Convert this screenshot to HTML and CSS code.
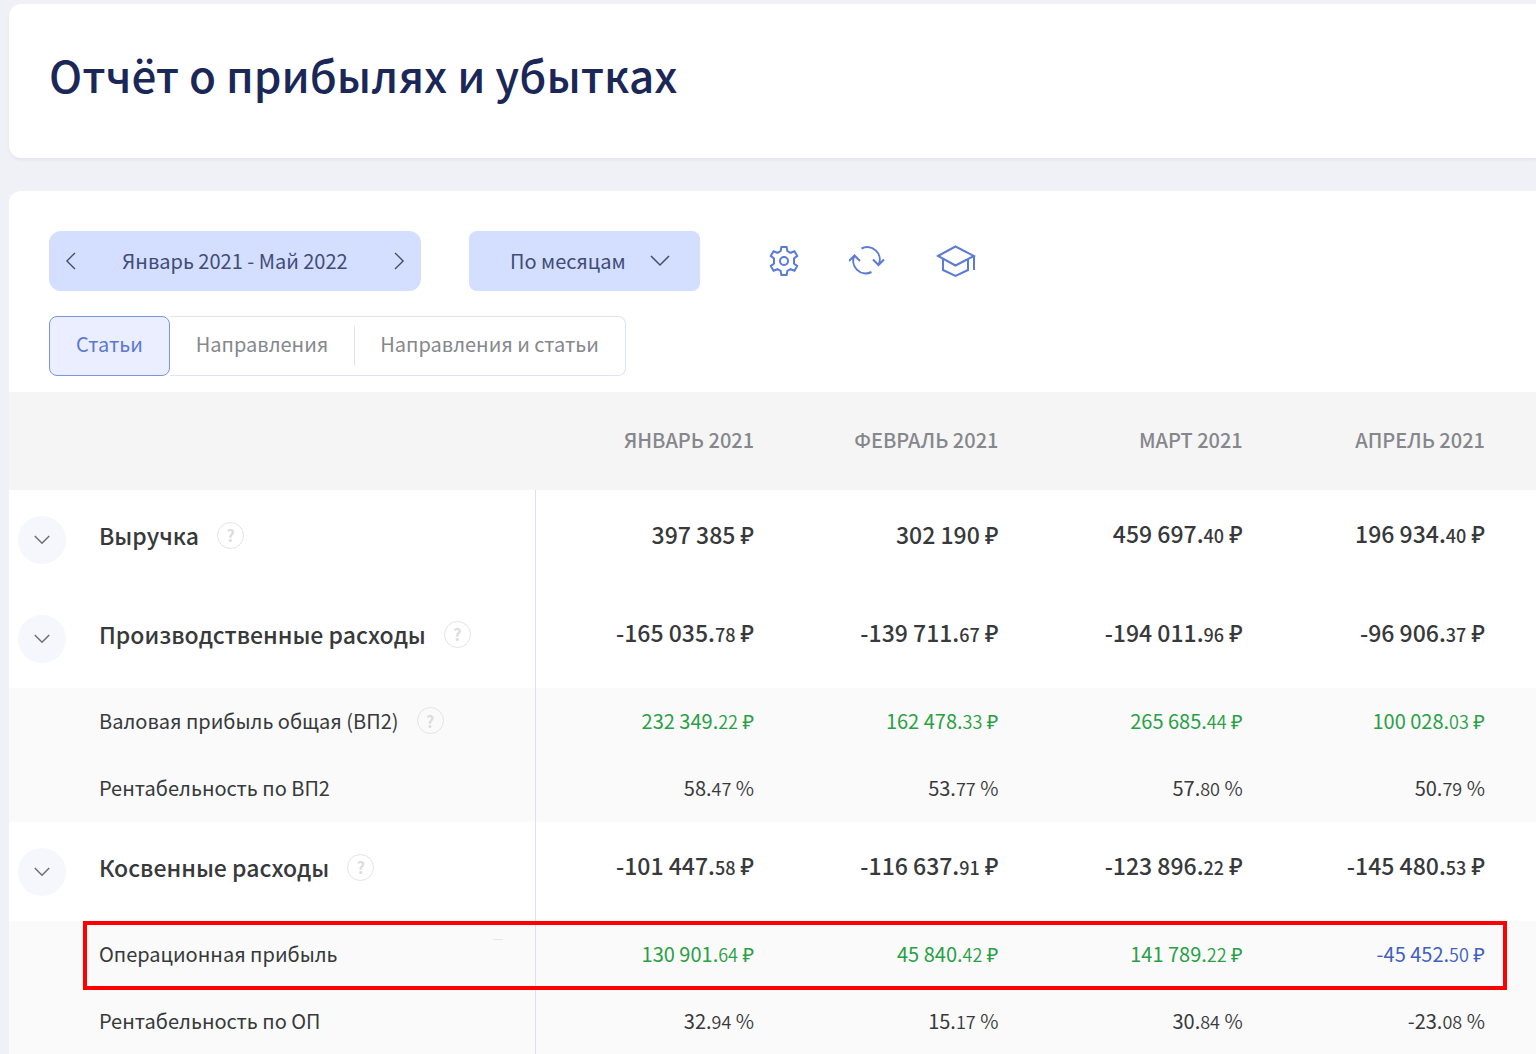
FILE: index.html
```html
<!DOCTYPE html>
<html lang="ru">
<head>
<meta charset="utf-8">
<meta name="viewport" content="width=device-width, initial-scale=1">
<title>Отчёт о прибылях и убытках</title>
<link rel="stylesheet" href="styles.css">
</head>
<body>
<svg class="sprite" aria-hidden="true">
  <symbol id="chevron-down" viewBox="0 0 20 12"><path d="M1 1l9 9 9-9"/></symbol>
  <symbol id="chevron-left" viewBox="0 0 12 20"><path d="M11 1L2 10l9 9"/></symbol>
  <symbol id="chevron-right" viewBox="0 0 12 20"><path d="M1 1l9 9-9 9"/></symbol>
</svg>
<header class="card page-head">
  <h1 class="page-title">Отчёт о прибылях и убытках</h1>
</header>
<main class="card report">
  <div class="toolbar">
    <div class="period">
      <button type="button" class="period-step" aria-label="Назад"><svg class="icon-side"><use href="#chevron-left"/></svg></button>
      <button type="button" class="period-value">Январь 2021 - Май 2022</button>
      <button type="button" class="period-step" aria-label="Вперёд"><svg class="icon-side"><use href="#chevron-right"/></svg></button>
    </div>
    <button type="button" class="grouping">По месяцам <svg class="icon-down"><use href="#chevron-down"/></svg></button>
    <div class="tools">
      <button type="button" class="tool" aria-label="Настройки">
        <svg width="32" height="32" viewBox="0 0 32 32"><path d="M13.400 2h5.200l.8 4 3.200 1.800 3.900-1.500 2.700 4.600-3.200 2.600v5l3.200 2.600-2.700 4.600-3.900-1.500-3.200 1.800-.8 4h-5.200l-.8-4-3.200-1.800-3.900 1.500-2.700-4.600L6 18.500v-5l-3.200-2.600 2.700-4.600 3.900 1.500L12.600 6z"/><circle cx="16" cy="16" r="4"/></svg>
      </button>
      <button type="button" class="tool" aria-label="Обновить">
        <svg width="38" height="32" viewBox="0 0 38 32"><path d="M12.500 3.500A12.500 12.500 0 0 1 29.500 20M24 14.500l5.500 5.500 5.500-5.500M22.500 27A12.500 12.500 0 0 1 5.500 10.500M0 16l5.500-5.500L11 16"/></svg>
      </button>
      <button type="button" class="tool" aria-label="Обучение">
        <svg width="40" height="34" viewBox="0 0 40 34"><path d="M2 12L19.500 2.500 38 12l-18.500 9.500zM7 15v11l12.500 6L32 26V15M38 12v14"/></svg>
      </button>
    </div>
  </div>
  <div class="tabs">
    <button type="button" class="tab tab-active" aria-pressed="true">Статьи</button>
    <button type="button" class="tab" aria-pressed="false">Направления</button>
    <button type="button" class="tab" aria-pressed="false">Направления и статьи</button>
  </div>
  <table class="grid">
    <colgroup><col class="col-name"><col class="col-month"><col class="col-month"><col class="col-month"><col class="col-last"></colgroup>
    <thead>
      <tr><td class="name"></td><th scope="col">ЯНВАРЬ 2021</th><th scope="col">ФЕВРАЛЬ 2021</th><th scope="col">МАРТ 2021</th><th scope="col">АПРЕЛЬ 2021</th></tr>
    </thead>
    <tbody>
      <tr class="group">
        <th scope="row" class="name"><div class="label"><button type="button" class="toggle" aria-label="Развернуть"><svg class="icon-toggle"><use href="#chevron-down"/></svg></button><div class="caption"><span>Выручка</span><button type="button" class="help">?</button></div></div></th>
        <td>397 385 ₽</td><td>302 190 ₽</td><td>459 697.<small>40</small> ₽</td><td>196 934.<small>40</small> ₽</td>
      </tr>
      <tr class="group">
        <th scope="row" class="name"><div class="label"><button type="button" class="toggle" aria-label="Развернуть"><svg class="icon-toggle"><use href="#chevron-down"/></svg></button><div class="caption"><span>Производственные расходы</span><button type="button" class="help">?</button></div></div></th>
        <td>-165 035.<small>78</small> ₽</td><td>-139 711.<small>67</small> ₽</td><td>-194 011.<small>96</small> ₽</td><td>-96 906.<small>37</small> ₽</td>
      </tr>
      <tr class="total">
        <th scope="row" class="name"><div class="label"><div class="caption"><span>Валовая прибыль общая (ВП2)</span><button type="button" class="help">?</button></div></div></th>
        <td class="plus">232 349.<small>22</small> ₽</td><td class="plus">162 478.<small>33</small> ₽</td><td class="plus">265 685.<small>44</small> ₽</td><td class="plus">100 028.<small>03</small> ₽</td>
      </tr>
      <tr class="total">
        <th scope="row" class="name"><div class="label"><div class="caption"><span>Рентабельность по ВП2</span></div></div></th>
        <td>58.<small>47</small> <i>%</i></td><td>53.<small>77</small> <i>%</i></td><td>57.<small>80</small> <i>%</i></td><td>50.<small>79</small> <i>%</i></td>
      </tr>
      <tr class="group">
        <th scope="row" class="name"><div class="label"><button type="button" class="toggle" aria-label="Развернуть"><svg class="icon-toggle"><use href="#chevron-down"/></svg></button><div class="caption"><span>Косвенные расходы</span><button type="button" class="help">?</button></div></div></th>
        <td>-101 447.<small>58</small> ₽</td><td>-116 637.<small>91</small> ₽</td><td>-123 896.<small>22</small> ₽</td><td>-145 480.<small>53</small> ₽</td>
      </tr>
      <tr class="total marked">
        <th scope="row" class="name"><div class="label"><div class="caption"><span>Операционная прибыль</span></div></div></th>
        <td class="plus">130 901.<small>64</small> ₽</td><td class="plus">45 840.<small>42</small> ₽</td><td class="plus">141 789.<small>22</small> ₽</td><td class="minus">-45 452.<small>50</small> ₽</td>
      </tr>
      <tr class="total">
        <th scope="row" class="name"><div class="label"><div class="caption"><span>Рентабельность по ОП</span></div></div></th>
        <td>32.<small>94</small> <i>%</i></td><td>15.<small>17</small> <i>%</i></td><td>30.<small>84</small> <i>%</i></td><td>-23.<small>08</small> <i>%</i></td>
      </tr>
    </tbody>
  </table>
</main>
</body>
</html>
```
FILE: styles.css
```css
* { box-sizing: border-box; }
body {
  margin: 0;
  padding: 4px 0 0 9px;
  background: #f0f1f7;
  color: #37393b;
  font: 400 20px/28px "Noto Sans CJK SC", "Noto Sans", sans-serif;
}
button {
  margin: 0;
  padding: 0;
  border: 0;
  background: none;
  color: inherit;
  font: inherit;
  cursor: pointer;
}
svg {
  display: block;
  fill: none;
  stroke: currentColor;
  stroke-width: 2;
}
.sprite { position: absolute; width: 0; height: 0; }
.card { background: #fff; border-radius: 12px 0 0 12px; }
.page-head {
  margin-bottom: 33px;
  padding: 38px 40px 52px;
  box-shadow: 0 2px 3px rgba(40, 40, 80, .06);
}
.page-title {
  margin: 0;
  color: #1b2857;
  font-size: 44px;
  font-weight: 500;
  line-height: 64px;
}
.report { padding-top: 40px; border-radius: 12px 0 0 0; }
.toolbar { display: flex; align-items: center; padding: 0 40px; }
.period {
  display: flex;
  width: 372px;
  height: 60px;
  margin-right: 48px;
  border-radius: 12px;
  background: #d4deff;
  color: #414c78;
}
.period-step { display: grid; place-items: center; width: 43px; }
.period-value { flex: 1; }
.icon-side { width: 11px; height: 18px; }
.icon-down { width: 20px; height: 12px; }
.grouping {
  display: flex;
  align-items: center;
  justify-content: space-between;
  width: 231px;
  height: 60px;
  padding: 0 30px 0 41px;
  border-radius: 8px;
  background: #d4deff;
  color: #414c78;
}
.icon-side, .icon-down { stroke-width: 1.5; }
.tools { display: flex; align-items: center; gap: 49px; margin-left: 68px; color: #5b7bd5; }
.tabs { display: flex; padding: 25px 40px 16px; }
.tab {
  position: relative;
  height: 60px;
  padding: 0 26px 4px;
  border: solid #dde4f8;
  border-width: 1px 0;
  color: #85888c;
}
.tab-active {
  border: 1px solid #7b96de;
  border-radius: 8px;
  background: #eaeeff;
  color: #5b78d0;
}
.tab:last-child { border-right-width: 1px; border-radius: 0 8px 8px 0; }
.tab:last-child::before {
  content: "";
  position: absolute;
  inset: 9px auto 9px 0;
  border-left: 1px solid #dde4f8;
}
.grid { width: 100%; border-spacing: 0; table-layout: fixed; }
.col-name { width: 34.5%; }
.col-month { width: 16%; }
.col-last { width: 17.5%; }
.grid th, .grid td { padding: 0 26px 2px 0; text-align: right; white-space: nowrap; }
.grid .group td { padding-bottom: 12px; }
.grid th:last-child, .grid td:last-child { padding-right: 51px; }
.grid .name { padding: 0; text-align: left; }
thead { background: #f5f5f5; color: #85878c; }
thead tr { height: 98px; }
thead th { font-weight: 500; }
tbody .name { border-right: 1px solid #dfe0ea; }
.label { display: flex; align-items: center; padding-left: 90px; }
.caption { display: flex; align-items: center; gap: 18px; padding-bottom: 2px; }
.group { height: 99px; font-size: 23px; font-weight: 500; }
.group th { font-weight: 500; }
.group .label { gap: 33px; padding-left: 9px; }
.group .caption { padding-bottom: 9px; }
.total { height: 67px; background: #fafafa; }
.total th { font-weight: 400; }
small { font-size: 18px; }
.total small, .total i { font-style: normal; font-weight: 350; }
.toggle {
  display: grid;
  place-items: center;
  width: 48px;
  height: 48px;
  border-radius: 50%;
  background: #f5f7fc;
  color: #6f7275;
}
.icon-toggle { width: 16px; height: 10px; }
.help {
  width: 27px;
  height: 27px;
  border: 1px solid #e3e3e3;
  border-radius: 50%;
  color: #dcdcdc;
  font-size: 16px;
  font-weight: 700;
  line-height: 24px;
}
.plus { color: #28a044; }
.minus { color: #405fc0; }
.marked { position: relative; }
.marked::after {
  content: "";
  position: absolute;
  inset: 0 29px -2px 74px;
  border: 4px solid #f00;
}
.marked .label::after {
  content: "";
  position: absolute;
  top: 18px;
  left: 484px;
  width: 10px;
  height: 1px;
  background: #e6e6e6;
}
```
